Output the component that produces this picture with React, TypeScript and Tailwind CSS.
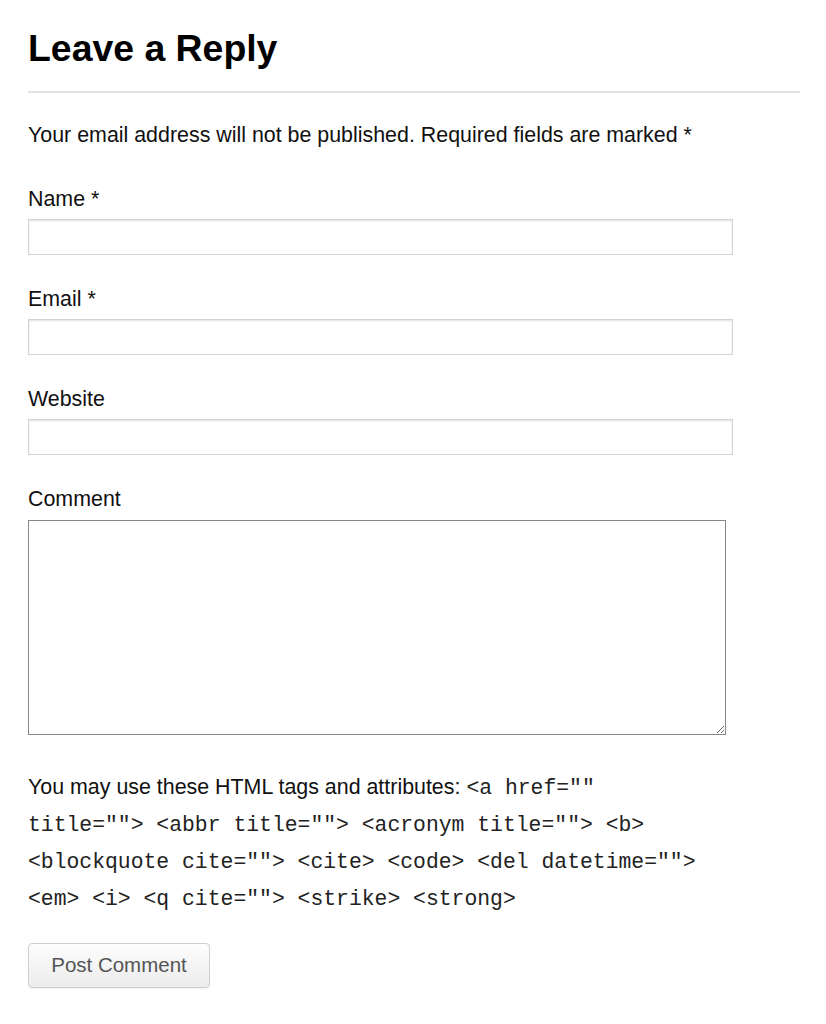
const Field = ({ label, mt }: { label: string; mt: string }) => {
  return (
    <div className={mt}>
      <label className="block text-[21.4px] leading-[28px] text-[#111]">{label}</label>
      <input
        type="text"
        className="mt-[6px] block w-[705px] h-[36px] border border-[#d4d4d4] bg-white shadow-[inset_0_1px_2px_rgba(0,0,0,0.12)] outline-none"
      />
    </div>
  );
};

const App = () => {
  return (
    <div className="bg-white min-h-[1024px] w-[826px] px-[28px] pt-[24px] font-['Liberation_Sans',Arial,sans-serif] text-black">
      <h3 className="text-[37.4px] leading-[48px] font-bold">Leave a Reply</h3>
      <div className="mt-[19px] h-[2px] w-[772px] bg-[#e2e2e2]"></div>

      <p className="mt-[28px] text-[21.4px] leading-[28px] text-[#111]">
        Your email address will not be published. Required fields are marked *
      </p>

      <Field label="Name *" mt="mt-[36px]" />
      <Field label="Email *" mt="mt-[30px]" />
      <Field label="Website" mt="mt-[30px]" />

      <div className="mt-[30px]">
        <label className="block text-[21.4px] leading-[28px] text-[#111]">Comment</label>
        <textarea className="mt-[7px] block w-[698px] h-[215px] border border-[#888] bg-white outline-none resize-y"></textarea>
      </div>

      <p className="mt-[34px] w-[680px] text-[21.4px] leading-[37px] text-[#111]">
        You may use these HTML tags and attributes:{' '}
        <code className="font-['Liberation_Mono','Courier_New',monospace] text-[21.4px] leading-[26px] text-[#222]">
          &lt;a href="" title=""&gt; &lt;abbr title=""&gt; &lt;acronym title=""&gt; &lt;b&gt; &lt;blockquote cite=""&gt; &lt;cite&gt; &lt;code&gt; &lt;del datetime=""&gt; &lt;em&gt; &lt;i&gt; &lt;q cite=""&gt; &lt;strike&gt; &lt;strong&gt;
        </code>
      </p>

      <button className="mt-[26px] h-[45px] w-[182px] rounded-[4px] border border-[#cfcfcf] bg-gradient-to-b from-[#fdfdfd] to-[#ececec] text-[20.5px] text-[#555] shadow-[0_1px_1px_rgba(0,0,0,0.06)]">
        Post Comment
      </button>
    </div>
  );
};

export default App;
